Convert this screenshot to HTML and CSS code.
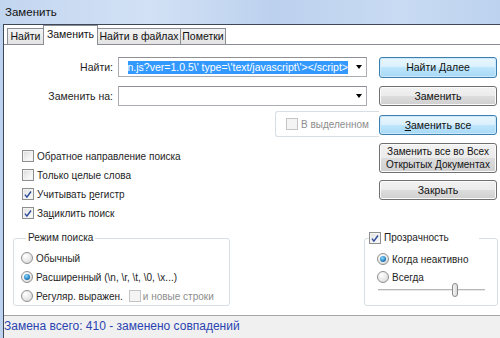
FILE: index.html
```html
<!DOCTYPE html>
<html lang="ru">
<head>
<meta charset="utf-8">
<title>Заменить</title>
<link rel="stylesheet" href="styles.css">
</head>
<body>
<div class="window">
  <div class="titlebar">Заменить</div>
  <div class="client">
    <div class="tabs">
      <div class="tab t1">Найти</div>
      <div class="tab t2 active">Заменить</div>
      <div class="tab t3">Найти в файлах</div>
      <div class="tab t4">Пометки</div>
    </div>
    <div class="panel">
      <div class="row r1">
        <div class="lbl">Найти:</div>
        <div class="combo">
          <div class="combo-text"><span class="sel">n.js?ver=1.0.5\' type=\'text/javascript\'&gt;&lt;/script&gt;</span></div>
          <span class="arrow"></span>
        </div>
        <div class="btn default">Найти Далее</div>
      </div>
      <div class="row r2">
        <div class="lbl">Заменить на:</div>
        <div class="combo">
          <div class="combo-text"></div>
          <span class="arrow"></span>
        </div>
        <div class="btn">Заменить</div>
      </div>
      <div class="row r3">
        <div class="selgroup">
          <span class="cb disabled"></span>
          <span class="dis-text">В выделенном</span>
        </div>
        <div class="btn default"><span><u>З</u>аменить все</span></div>
      </div>
      <div class="row r4">
        <div class="checks">
          <div class="item"><span class="cb"></span><span>Обратное направление поиска</span></div>
          <div class="item"><span class="cb"></span><span>Только целые слова</span></div>
          <div class="item"><span class="cb checked"><svg viewBox="0 0 11 11" width="11" height="11"><path d="M2.2 5.6 L4.3 8.4 L8.8 2.2" fill="none" stroke="#2b4a9a" stroke-width="1.6"/></svg></span><span>Учитывать <u>р</u>егистр</span></div>
          <div class="item"><span class="cb checked"><svg viewBox="0 0 11 11" width="11" height="11"><path d="M2.2 5.6 L4.3 8.4 L8.8 2.2" fill="none" stroke="#2b4a9a" stroke-width="1.6"/></svg></span><span>За<u>ц</u>иклить поиск</span></div>
        </div>
        <div class="btncol">
          <div class="btn tall">Заменить все во Всех<br>Открытых Документах</div>
          <div class="btn">Закрыть</div>
        </div>
      </div>
      <div class="bottom">
        <fieldset class="group mode">
          <legend>Режим поиска</legend>
          <div class="item"><span class="rb"></span><span>Обычный</span></div>
          <div class="item"><span class="rb on"></span><span>Расширенный (\n, \r, \t, \0, \x...)</span></div>
          <div class="item"><span class="rb"></span><span>Регуляр. выражен.</span><span class="cb disabled ml"></span><span class="dis-text">и новые строки</span></div>
        </fieldset>
        <fieldset class="group trans">
          <legend><span class="cb checked"><svg viewBox="0 0 11 11" width="11" height="11"><path d="M2.2 5.6 L4.3 8.4 L8.8 2.2" fill="none" stroke="#2b4a9a" stroke-width="1.6"/></svg></span><span>Прозрачность</span></legend>
          <div class="item"><span class="rb on"></span><span>Когда неактивно</span></div>
          <div class="item"><span class="rb"></span><span>Всегда</span></div>
          <div class="slider"><span class="track"></span><span class="thumb"></span></div>
        </fieldset>
      </div>
    </div>
    <div class="status">Замена всего: 410 - заменено совпадений</div>
  </div>
</div>
</body>
</html>
```
FILE: styles.css
```css
* { box-sizing: border-box; }
html, body { margin: 0; padding: 0; }
body {
  width: 500px;
  height: 338px;
  overflow: hidden;
  background: #bdd2ee;
  font-family: "Liberation Sans", Arial, sans-serif;
  font-size: 10px;
  color: #1e1e1e;
}
.window { display: flex; flex-direction: column; height: 338px; }
.titlebar {
  height: 24px;
  line-height: 24px;
  padding-left: 5px;
  font-size: 11.5px;
  color: #111;
  background: linear-gradient(to right, #c3d6f0, #d2e1f5 30%, #bcd1ee 55%, #c9dbf3 80%, #bcd2ee);
}
.client {
  flex: 1;
  display: flex;
  flex-direction: column;
  margin-left: 3px;
  border-left: 1px solid #3d4757;
  border-top: 1px solid #3d4757;
  background: #fff;
}
.tabs {
  height: 19px;
  display: flex;
  align-items: flex-end;
  padding-left: 3px;
}
.tab {
  height: 16px;
  line-height: 15px;
  padding: 0;
  text-align: center;
  white-space: nowrap;
  border: 1px solid #8a8d94;
  border-bottom: none;
  border-right: none;
  background: linear-gradient(#f3f3f3, #e3e3e3);
  color: #111;
  font-size: 10.5px;
}
.t4 { border-right: 1px solid #8a8d94; }
.tab.active {
  height: 20px;
  margin-bottom: -1px;
  line-height: 17px;
  background: #fff;
  border-right: 1px solid #8a8d94;
  position: relative;
  z-index: 1;
}
.tab.active + .tab { border-left: none; }
.t1 { width: 36px; }
.t2 { width: 55px; }
.t3 { width: 82px; }
.t4 { width: 46px; }
.panel {
  height: 271px;
  border-top: 1px solid #8a8d94;
  padding-top: 12px;
  display: flex;
  flex-direction: column;
}
.row { display: flex; align-items: flex-start; padding-right: 3px; }
.r1, .r2 { height: 20px; }
.r2 { margin-top: 9px; }
.r3 { margin-top: 5px; height: 26px; }
.r4 { margin-top: 6px; height: 83px; }
.lbl {
  width: 109px;
  margin-right: 5px;
  text-align: right;
  line-height: 20px;
  font-size: 10.5px;
}
.combo {
  width: 249px;
  height: 20px;
  border: 1px solid #abadb3;
  border-top-color: #8e9096;
  display: flex;
  align-items: center;
  padding-left: 1px;
}
.combo-text {
  width: 228px;
  height: 13px;
  display: flex;
  justify-content: flex-end;
  overflow: hidden;
}
.sel {
  white-space: nowrap;
  background: #3399ff;
  color: #fff;
  line-height: 13px;
  font-size: 10.5px;
}
.arrow {
  margin-left: auto;
  margin-right: 4px;
  width: 0;
  height: 0;
  border-left: 3.5px solid transparent;
  border-right: 3.5px solid transparent;
  border-top: 4px solid #000;
}
.btn {
  margin-left: auto;
  width: 118px;
  height: 20px;
  border: 1px solid #707070;
  border-radius: 3px;
  background: linear-gradient(#f2f2f2 0%, #ebebeb 50%, #dddddd 50%, #cfcfcf 100%);
  box-shadow: inset 0 0 0 1px #fbfbfb;
  display: flex;
  align-items: center;
  justify-content: center;
  text-align: center;
  line-height: 13px;
  white-space: nowrap;
  color: #111;
  font-size: 10.5px;
}
.btn.default {
  border-color: #3c7fb1;
  background: linear-gradient(#eaf6fd 0%, #d9f0fc 50%, #bee6fd 50%, #a7d9f5 100%);
  box-shadow: inset 0 0 0 1px #cbe9fb;
}
.r1 .btn { height: 21px; }
.r3 .btn { margin-top: 4px; margin-left: 0; }
.selgroup {
  margin-left: 271px;
  width: 104px;
  height: 26px;
  border: 1px solid #d5dfe5;
  border-right: none;
  border-radius: 3px 0 0 3px;
  display: flex;
  align-items: center;
  padding-left: 10px;
  white-space: nowrap;
}
.dis-text { color: #8d8d8d; margin-left: 3px; white-space: nowrap; }
.cb {
  display: inline-flex;
  flex: none;
  width: 12px;
  height: 12px;
  border: 1px solid #8e8f8f;
  background: linear-gradient(135deg, #d9d9d9, #f7f7f7 70%, #fdfdfd);
  box-shadow: inset 0 0 0 1px #f3f3f3;
  align-items: center;
  justify-content: center;
}
.cb.checked { background: linear-gradient(135deg, #e2e2e2, #fbfbfb); }
.cb.disabled { border-color: #c4c4c4; background: #f4f4f4; box-shadow: none; }
.checks {
  flex: 1;
  padding-left: 18px;
  padding-top: 7px;
}
.item {
  display: flex;
  align-items: center;
  height: 12px;
  margin-bottom: 7px;
  white-space: nowrap;
}
.item > .cb + span, .item > .rb + span { margin-left: 3px; }
.btncol { width: 118px; display: flex; flex-direction: column; gap: 7px; }
.btn.tall { height: 30px; line-height: 13px; font-size: 10px; }
.bottom {
  margin-top: 5px;
  display: flex;
  justify-content: space-between;
  padding: 0 2px 0 9px;
}
.group {
  margin: 0;
  padding: 0;
  border: 1px solid #d5dfe5;
  border-radius: 3px;
  min-width: 0;
}
.group legend {
  padding: 0 2px;
  line-height: 14px;
  height: 14px;
}
.mode { width: 217px; padding: 0 0 3px 7px; }
.mode legend { margin-left: 5px; }
.mode .item:first-of-type { margin-top: 7px; }
.mode .item:last-child { margin-bottom: 0; }
.rb {
  display: inline-block;
  flex: none;
  width: 12px;
  height: 12px;
  border-radius: 50%;
  border: 1px solid #8e8f8f;
  background: radial-gradient(circle at 35% 30%, #ffffff, #e6e6e6 60%, #cfcfcf);
  position: relative;
}
.rb.on::after {
  content: "";
  position: absolute;
  left: 2px;
  top: 2px;
  width: 6px;
  height: 6px;
  border-radius: 50%;
  background: radial-gradient(circle at 40% 35%, #8fdcff, #2a86c4 55%, #0f4a7e);
}
.ml { margin-left: 6px; }
.cb.ml + .dis-text { margin-left: 2px; }
.trans { width: 134px; padding: 0 0 7px 12px; }
.trans legend {
  margin-left: -8px;
  width: 110px;
  display: flex;
  align-items: center;
  padding: 0;
}
.trans legend .cb { margin-right: 3px; }
.trans .item:first-of-type { margin-top: 8px; margin-bottom: 6px; }
.trans .item { margin-bottom: 0; }
.slider {
  position: relative;
  height: 14px;
  width: 108px;
}
.track {
  position: absolute;
  left: 1px;
  right: 0;
  top: 6px;
  height: 2px;
  border-top: 1px solid #b8b8b8;
  border-bottom: 1px solid #e8e8e8;
}
.thumb {
  position: absolute;
  left: 75px;
  top: 0;
  width: 6px;
  height: 14px;
  border: 1px solid #8a8a8a;
  border-radius: 3px;
  background: linear-gradient(to right, #f4f4f4, #dadada);
}
.status {
  flex: 1;
  border-top: 1px solid #a5a5a5;
  background: #f0f0f0;
  color: #2b44b1;
  font-size: 12px;
  line-height: 21px;
}
```
